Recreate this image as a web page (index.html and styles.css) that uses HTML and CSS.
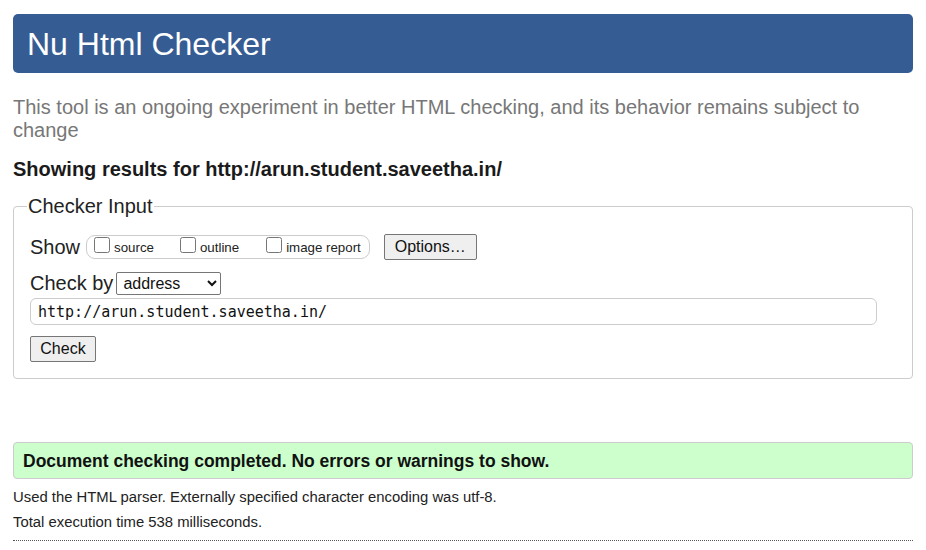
FILE: index.html
```html
<!DOCTYPE html>
<html lang="en">
<head>
<meta charset="utf-8">
<title>Nu Html Checker</title>
<link rel="stylesheet" href="styles.css">
</head>
<body>
<h1 class="title">Nu Html Checker</h1>
<p class="intro">This tool is an ongoing experiment in better HTML checking, and its behavior remains subject to change</p>
<p class="showing">Showing results for http://arun.student.saveetha.in/</p>
<form class="form">
  <fieldset class="checker">
    <legend class="legend">Checker Input</legend>
    <div class="row show-row">
      <span class="label">Show</span>
      <span class="group">
        <label class="opt opt-source"><input type="checkbox" class="cb">source</label>
        <label class="opt opt-outline"><input type="checkbox" class="cb">outline</label>
        <label class="opt opt-image"><input type="checkbox" class="cb">image report</label>
      </span>
      <button type="button" class="btn btn-options">Options…</button>
    </div>
    <div class="row by-row">
      <span class="label">Check by</span>
      <select class="select"><option>address</option></select>
    </div>
    <input class="url" type="text" value="http://arun.student.saveetha.in/">
    <div class="row submit-row">
      <button type="button" class="btn btn-check">Check</button>
    </div>
  </fieldset>
</form>
<p class="success">Document checking completed. No errors or warnings to show.</p>
<p class="details details-first">Used the HTML parser. Externally specified character encoding was utf-8.</p>
<p class="details">Total execution time 538 milliseconds.</p>
<hr class="rule">
</body>
</html>
```

FILE: styles.css
```css
html, body {
  margin: 0;
  padding: 0;
  background: #fff;
}
body {
  padding: 14px 13px 0 13px;
  font-family: "Liberation Sans", Arial, sans-serif;
  color: #111;
}
.title {
  margin: 0;
  height: 59px;
  line-height: 60px;
  padding-left: 14px;
  background: #365c94;
  color: #fff;
  font-size: 32px;
  font-weight: normal;
  border-radius: 5px;
}
.intro {
  margin: 23px 0 0 0;
  font-size: 20px;
  line-height: 23px;
  color: #777;
}
.showing {
  margin: 16px 0 0 0;
  font-size: 20px;
  line-height: 23px;
  font-weight: bold;
  color: #1a1a1a;
}
.form {
  margin: 14px 0 0 0;
}
.checker {
  margin: 0;
  border: 1px solid #ccc;
  border-radius: 4px;
  padding: 0 16px 16px 16px;
}
.legend {
  font-size: 20px;
  line-height: 23px;
  padding: 0 1px;
  margin-left: -3px;
  color: #222;
}
.row {
  display: flex;
  align-items: center;
}
.label {
  font-size: 20px;
  line-height: 23px;
  color: #222;
}
.show-row {
  margin-top: 16px;
  height: 26px;
}
.group {
  display: flex;
  align-items: center;
  height: 22px;
  margin-left: 6px;
  border: 1px solid #ccc;
  border-radius: 9px;
  padding: 0 8px 0 7px;
}
.opt {
  display: flex;
  align-items: center;
  font-size: 13.3px;
  color: #222;
}
.cb {
  margin: 0 4px 4px 0;
  width: 16px;
  height: 16px;
}
.opt-source {
  margin-right: 26px;
}
.opt-outline {
  margin-right: 27px;
}
.btn {
  font-family: "Liberation Sans", Arial, sans-serif;
  font-size: 16px;
  color: #111;
  background: #efefef;
  border: 1px solid #767676;
  border-radius: 2px;
  padding: 0;
  height: 26px;
}
.btn-options {
  margin-left: 14px;
  width: 93px;
}
.by-row {
  margin-top: 12px;
  height: 23px;
}
.select {
  margin-left: 3px;
  width: 105px;
  height: 23px;
  font-family: "Liberation Sans", Arial, sans-serif;
  font-size: 16px;
  color: #111;
  border: 1px solid #767676;
  border-radius: 2px;
  background: #fff;
  padding: 0 2px;
}
.url {
  display: block;
  box-sizing: border-box;
  margin-top: 3px;
  width: 847px;
  height: 27px;
  border: 1px solid #ccc;
  border-radius: 6px;
  padding: 0 7px;
  font-family: "DejaVu Sans Mono", "Liberation Mono", monospace;
  font-size: 15px;
  color: #111;
  outline: none;
}
.submit-row {
  margin-top: 11px;
}
.btn-check {
  width: 66px;
}
.success {
  margin: 63px 0 0 0;
  height: 35px;
  line-height: 36px;
  padding-left: 9px;
  background: #ccffcc;
  border: 1px solid #ccc;
  border-radius: 4px;
  font-size: 17.5px;
  font-weight: bold;
  color: #111;
}
.details {
  margin: 0;
  font-size: 14.85px;
  line-height: 25px;
  color: #222;
}
.details-first {
  margin-top: 6px;
}
.rule {
  margin: 5px 0 0 0;
  border: 0;
  border-top: 1px dotted #555;
  height: 0;
}
```
